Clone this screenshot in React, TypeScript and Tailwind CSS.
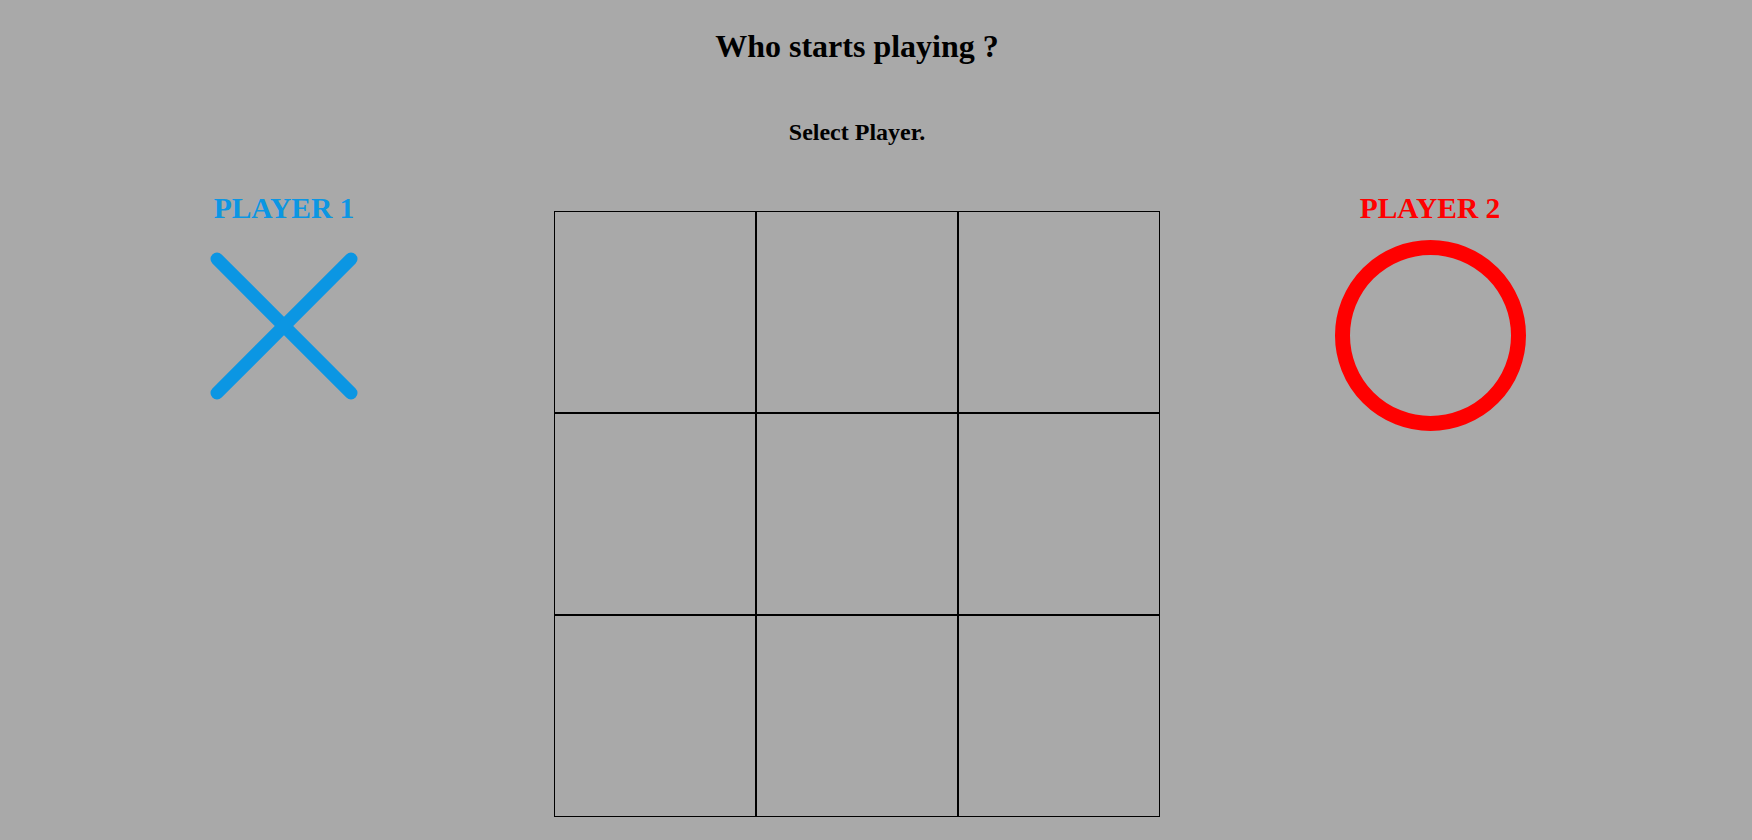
const cells = Array.from({ length: 9 }, (_, i) => i);

function Cross() {
  return (
    <svg width="150" height="150" viewBox="0 0 150 150" className="block">
      <line
        x1="8"
        y1="8"
        x2="142"
        y2="142"
        stroke="#0b96e3"
        strokeWidth="13"
        strokeLinecap="round"
      />
      <line
        x1="142"
        y1="8"
        x2="8"
        y2="142"
        stroke="#0b96e3"
        strokeWidth="13"
        strokeLinecap="round"
      />
    </svg>
  );
}

export default function App() {
  return (
    <main
      className="min-h-screen w-full bg-[#a9a9a9] text-black"
      style={{ fontFamily: '"Liberation Serif", "Times New Roman", serif' }}
    >
      <div className="w-[1714px] pb-[22px]">
        <h1 className="pt-[28px] text-center text-[32px] font-bold leading-[37px]">
          Who starts playing ?
        </h1>
        <p className="mt-[53px] text-center text-[24px] font-bold leading-[28px]">
          Select Player.
        </p>

        <div className="mt-[44px] flex items-start gap-[120px] pl-[134px]">
          <div className="flex w-[300px] flex-col items-center">
            <p className="text-[29.5px] font-bold leading-[37px] text-[#0b96e3]">
              PLAYER 1
            </p>
            <div className="mt-[24px]">
              <Cross />
            </div>
          </div>

          <div className="mt-[21px] grid w-[606px] grid-cols-3">
            {cells.map((cell) => (
              <div
                key={cell}
                className="h-[202px] w-[202px] border border-black"
              />
            ))}
          </div>

          <div className="flex w-[300px] flex-col items-center">
            <p className="text-[29.5px] font-bold leading-[37px] text-[#ff0000]">
              PLAYER 2
            </p>
            <div className="mt-[13px] h-[191px] w-[191px] rounded-full border-[15px] border-[#ff0000]" />
          </div>
        </div>
      </div>
    </main>
  );
}
